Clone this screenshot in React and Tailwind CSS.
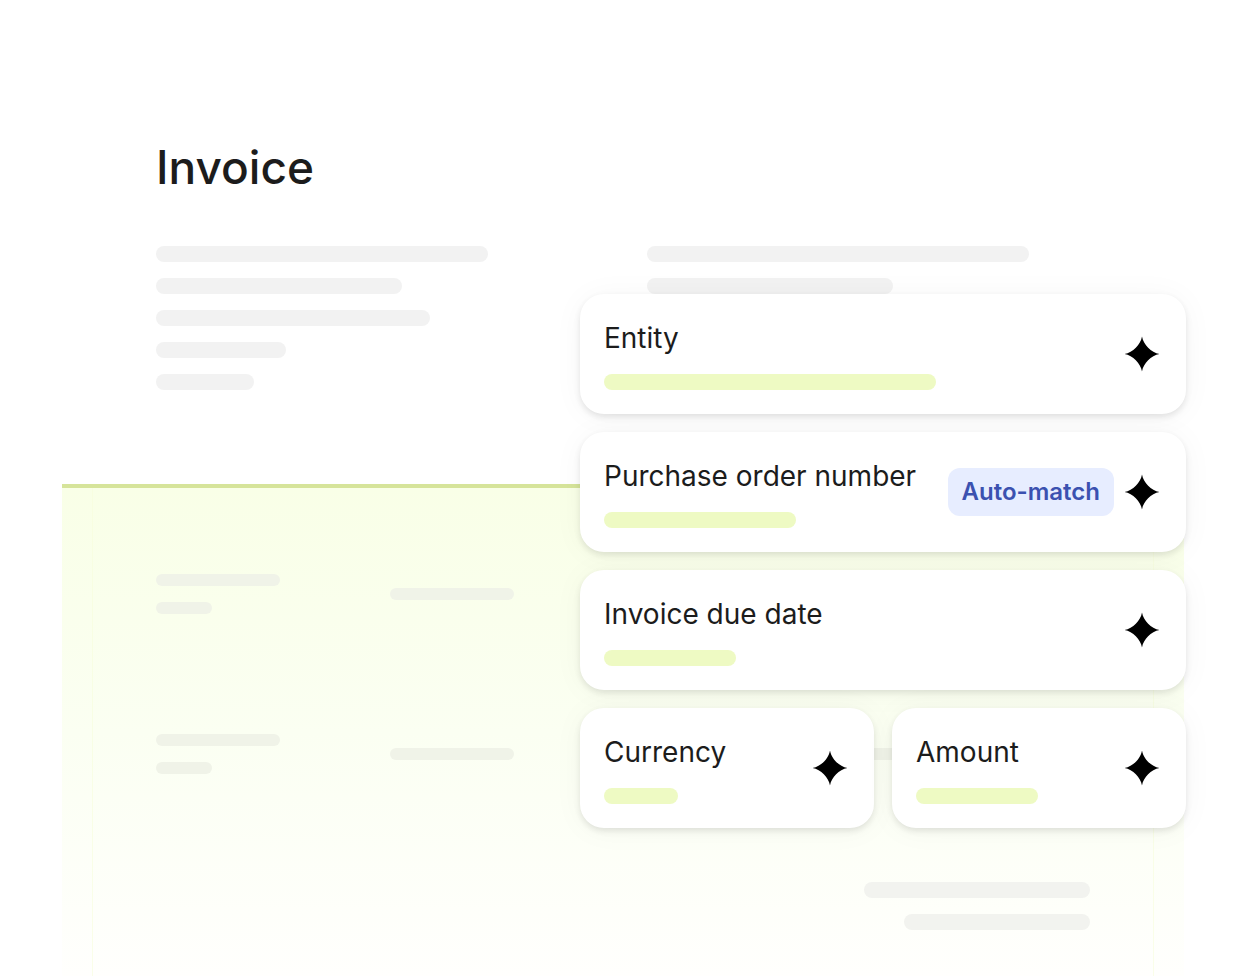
import React from "react";
import clsx from "clsx";

const addressLines = ["w-[332px]", "w-[246px]", "w-[274px]", "w-[130px]", "w-[98px]"];
const detailLines = ["w-[382px]", "w-[246px]"];
const lineItems = [1, 2];

const Line = ({ className }) => (
  <div className={clsx("h-4 rounded-lg bg-[#f2f2f2]", className)} />
);

const ItemLine = ({ className }) => (
  <div className={clsx("h-3 rounded-md bg-[#f0f3e8]", className)} />
);

const Sparkle = () => (
  <svg viewBox="0 0 40 40" className="size-10 shrink-0" aria-hidden="true">
    <path
      d="M20 2.5C21.6 11 29 18.4 37.5 20C29 21.6 21.6 29 20 37.5C18.4 29 11 21.6 2.5 20C11 18.4 18.4 11 20 2.5Z"
      fill="#000"
    />
  </svg>
);

const FieldCard = ({ label, barWidth, badge, className }) => (
  <div
    className={clsx(
      "flex items-center gap-2 rounded-3xl bg-white p-6 shadow-[0_3px_6px_rgba(0,0,0,0.1),0_2px_32px_rgba(0,0,0,0.04)]",
      className
    )}
  >
    <div className="min-w-0 flex-1">
      <p className="mb-4 text-[28px] leading-10 whitespace-nowrap text-[#1c1c1c]">{label}</p>
      <div className={clsx("h-4 rounded-lg bg-[#eefac3]", barWidth)} />
    </div>
    {badge && (
      <span className="rounded-xl bg-[#e7edff] px-3.5 text-2xl leading-12 font-semibold whitespace-nowrap text-[#3b51b0]">
        {badge}
      </span>
    )}
    <Sparkle />
  </div>
);

const App = () => {
  return (
    <main className="relative flex min-h-screen flex-col overflow-hidden bg-white font-['Inter',sans-serif]">
      {/* Invoice header */}
      <section className="mr-[72px] ml-[62px] px-[94px] pt-[143px] pb-[94px]">
        <h1 className="mb-[55px] text-[46px] leading-12 font-medium text-[#1c1c1c]">Invoice</h1>
        <div className="grid grid-cols-2 gap-12">
          <div className="flex flex-col gap-4">
            {addressLines.map((width) => (
              <Line key={width} className={width} />
            ))}
          </div>
          <div className="flex flex-col gap-4">
            {detailLines.map((width) => (
              <Line key={width} className={width} />
            ))}
          </div>
        </div>
      </section>

      {/* Scanned area */}
      <section className="mr-[72px] ml-[62px] flex flex-1 flex-col border-t-4 border-[#d6e49a] bg-linear-to-b from-[#f9ffe7] via-[#fbfff2] to-[#fffffd] px-[30px]">
        <div className="flex-1 border-x border-[#f6fddc]/60 px-[63px] pt-[86px] pb-11">
          <div className="flex flex-col gap-30">
            {lineItems.map((item) => (
              <div key={item} className="grid grid-cols-4 items-center">
                <div className="flex flex-col gap-4">
                  <ItemLine className="w-[124px]" />
                  <ItemLine className="w-14" />
                </div>
                <ItemLine className="w-[124px]" />
                <ItemLine className="w-[124px]" />
                <ItemLine className="w-[124px]" />
              </div>
            ))}
          </div>
          <div className="mt-27 flex flex-col items-end gap-4">
            <div className="h-4 w-[226px] rounded-lg bg-[#f2f3ef]" />
            <div className="h-4 w-[186px] rounded-lg bg-[#f2f3ef]" />
          </div>
        </div>
      </section>

      {/* Extracted fields */}
      <div className="absolute top-[294px] right-[70px] flex w-[606px] flex-col gap-[18px]">
        <FieldCard label="Entity" barWidth="w-[332px]" />
        <FieldCard label="Purchase order number" barWidth="w-48" badge="Auto-match" />
        <FieldCard label="Invoice due date" barWidth="w-[132px]" />
        <div className="flex gap-[18px]">
          <FieldCard label="Currency" barWidth="w-[74px]" className="flex-1" />
          <FieldCard label="Amount" barWidth="w-[122px]" className="flex-1" />
        </div>
      </div>
    </main>
  );
};

export default App;
